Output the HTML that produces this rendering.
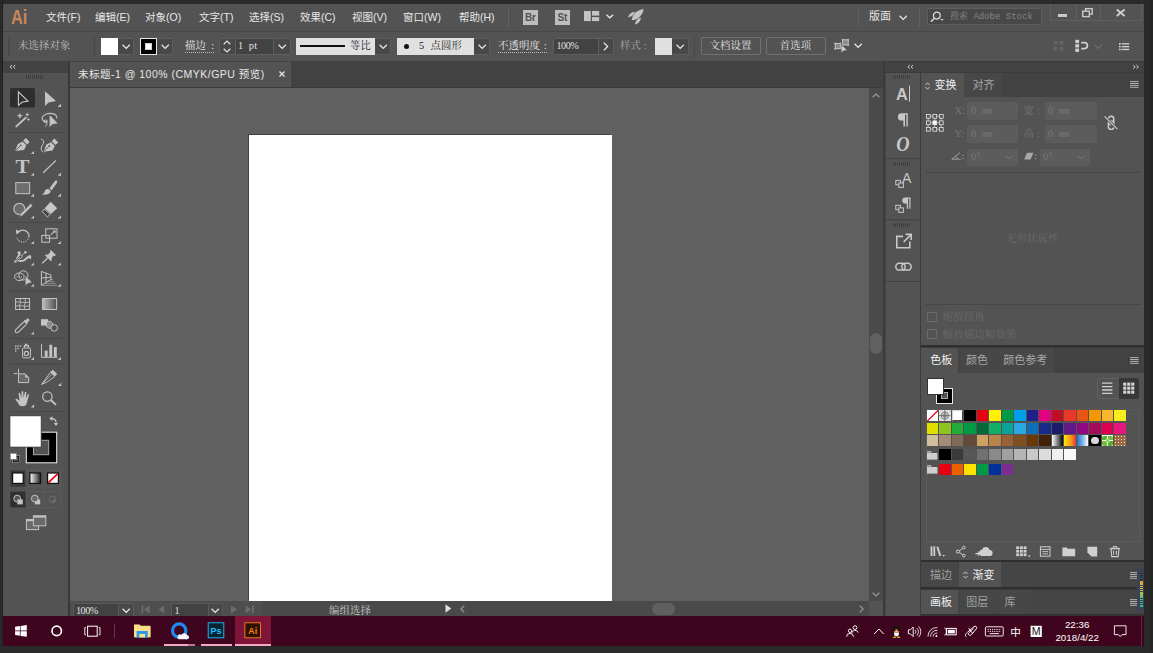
<!DOCTYPE html>
<html lang="zh-CN">
<head>
<meta charset="utf-8">
<title>Adobe Illustrator</title>
<style>
*{box-sizing:border-box;margin:0;padding:0}
html,body{width:1153px;height:653px;overflow:hidden;background:#2a2a2a}
body{position:relative;font-family:"Liberation Sans","Noto Sans CJK SC",sans-serif;font-size:11px;color:#ddd}
.a{position:absolute}
.t{position:absolute;white-space:nowrap;line-height:1}
.sans{font-family:"Liberation Sans","Noto Sans CJK SC",sans-serif}
.serif{font-family:"Liberation Serif","Noto Serif CJK SC",serif}
.mono{font-family:"Liberation Mono","Noto Serif CJK SC",monospace}
svg{position:absolute;overflow:visible}
.dd{position:absolute;background:#484848;border:1px solid #5e5e5e;border-left:none;border-radius:0 2px 2px 0}
.fld{position:absolute;background:#454545;border:1px solid #5e5e5e}
.btn{position:absolute;border:1px solid #717171;border-radius:2px;text-align:center;color:#e0e0e0}
.m{top:11.5px;font-size:10.5px;color:#e8e8e8}
.c{top:41px;font-size:10.4px;letter-spacing:0.1px}
.pt{font-size:11px}
.ul{border-bottom:1px dotted #bbb}
</style>
</head>
<body>
<!-- outer dark frame -->
<div class="a" style="left:2.4px;top:0;width:0.8px;height:646px;background:#202020"></div>
<div class="a" style="left:1144px;top:0;width:9px;height:653px;background:#2a2a2a"></div>
<div class="a" style="left:1149.5px;top:0;width:3.5px;height:653px;background:#252525"></div>

<!-- ===== APP WINDOW ===== -->
<div id="app" class="a" style="left:3px;top:4px;width:1141px;height:612px;background:#535353"></div>

<!-- MENU BAR -->
<div id="menubar" class="a" style="left:3px;top:4px;width:1141px;height:27px;background:#535353"></div>
<div class="a" style="left:3px;top:31px;width:1141px;height:1px;background:#474747"></div>

<!-- menu content -->
<div class="t sans" style="left:11px;top:6.5px;font-size:20px;font-weight:bold;color:#c8875a;transform:scaleX(0.82);transform-origin:0 0">Ai</div>
<div class="t m" style="left:46px">文件(F)</div>
<div class="t m" style="left:95px">编辑(E)</div>
<div class="t m" style="left:145px">对象(O)</div>
<div class="t m" style="left:199px">文字(T)</div>
<div class="t m" style="left:249px">选择(S)</div>
<div class="t m" style="left:300px">效果(C)</div>
<div class="t m" style="left:352px">视图(V)</div>
<div class="t m" style="left:403px">窗口(W)</div>
<div class="t m" style="left:459px">帮助(H)</div>
<div class="a" style="left:508px;top:8px;width:1px;height:18px;background:#626262"></div>
<div class="a sans" style="left:523px;top:10px;width:14.5px;height:14.5px;background:#bdbdbd;color:#535353;font-size:10px;font-weight:bold;line-height:15px;text-align:center;letter-spacing:-0.3px">Br</div>
<div class="a sans" style="left:555px;top:10px;width:14.5px;height:14.5px;background:#bdbdbd;color:#535353;font-size:10px;font-weight:bold;line-height:15px;text-align:center;letter-spacing:-0.3px">St</div>
<svg style="left:584px;top:10.9px" width="16" height="11" viewBox="0 0 16 11"><rect x="0" y="0" width="6.8" height="10.1" fill="#c4c4c4"/><rect x="8" y="0" width="7.2" height="4.6" fill="#c4c4c4"/><rect x="8" y="6.1" width="7.2" height="4" fill="#c4c4c4"/></svg>
<svg style="left:606px;top:14px" width="8" height="5" viewBox="0 0 8 5"><path d="M0.5 0.8 L3.8 3.8 L7.1 0.8" fill="none" stroke="#e8e8e8" stroke-width="1.3"/></svg>
<svg style="left:0;top:0" width="660" height="30" viewBox="0 0 660 30"><path d="M643.5 8.9 C637.6 9.6 632.2 14 631.7 20 C637.6 20.4 642.9 15 643.5 8.9 Z" fill="#c4c4c4"/><path d="M635 11.8 C631.6 11.9 628.9 14.3 628 17.3 C631.2 17.2 633.8 15 635 11.8 Z" fill="#c4c4c4"/><path d="M640.8 17.6 C640.9 20.8 638.6 23.5 635 24.6 C635.1 21.4 637.5 18.7 640.8 17.6 Z" fill="#c4c4c4"/></svg>
<!-- right of menu -->
<div class="a" style="left:858px;top:8px;width:1px;height:18px;background:#626262"></div>
<div class="t sans" style="left:869px;top:11px;font-size:11px;color:#e6e6e6">版面</div>
<svg style="left:899px;top:15px" width="9" height="6" viewBox="0 0 9 6"><path d="M0.6 0.8 L4.2 4.4 L7.8 0.8" fill="none" stroke="#e8e8e8" stroke-width="1.3"/></svg>
<div class="a" style="left:919px;top:8px;width:1px;height:18px;background:#626262"></div>
<div class="a" style="left:927px;top:8.2px;width:115px;height:17.2px;background:#484848;border:1px solid #5e5e5e;border-radius:2px"></div>
<svg style="left:930px;top:11px" width="16" height="12" viewBox="0 0 16 12"><circle cx="6.8" cy="4.6" r="3.4" fill="none" stroke="#d8d8d8" stroke-width="1.3"/><path d="M4.4 7.2 L1 10.6" stroke="#d8d8d8" stroke-width="1.5" fill="none"/><path d="M10.3 8 L13.7 8 L12 9.8 Z" fill="#d8d8d8"/></svg>
<div class="t mono" style="left:950px;top:13px;font-size:9px;color:#858585;letter-spacing:0px">搜索 Adobe Stock</div>
<!-- window controls -->
<div class="a" style="left:1050px;top:4px;width:92px;height:16.5px;border:1px solid #5f5f5f;border-top:none"></div>
<div class="a" style="left:1075.5px;top:4px;width:1px;height:16px;background:#5f5f5f"></div>
<div class="a" style="left:1099.5px;top:4px;width:1px;height:16px;background:#5f5f5f"></div>
<div class="a" style="left:1058px;top:13.5px;width:9px;height:3px;background:#c8c8c8"></div>
<svg style="left:1082px;top:8px" width="12" height="10" viewBox="0 0 12 10"><rect x="3.6" y="0.7" width="6.6" height="5.4" fill="none" stroke="#c8c8c8" stroke-width="1.4"/><rect x="0.7" y="3.2" width="6.6" height="5.4" fill="#535353" stroke="#c8c8c8" stroke-width="1.4"/></svg>
<svg style="left:1116px;top:9px" width="10" height="8" viewBox="0 0 10 8"><path d="M0.8 0.5 L8.6 7 M8.6 0.5 L0.8 7" stroke="#d0d0d0" stroke-width="1.8" fill="none"/></svg>

<!-- CONTROL BAR -->
<div id="ctrlbar" class="a" style="left:3px;top:32px;width:1141px;height:29px;background:#535353"></div>

<!-- control bar content -->
<div class="a" style="left:8px;top:38px;width:2px;height:18px;background:repeating-linear-gradient(to bottom,#3e3e3e 0,#3e3e3e 1px,transparent 1px,transparent 2px)"></div>
<div class="t serif c" style="left:18px;color:#bdbdbd">未选择对象</div>
<div class="a" style="left:94px;top:35px;width:1px;height:22px;background:#474747"></div>
<div class="a" style="left:101px;top:38px;width:17px;height:16.5px;background:#fff"></div>
<div class="dd" style="left:118px;top:38px;width:16px;height:16.5px"></div><svg style="left:122px;top:44px" width="9" height="6" viewBox="0 0 9 6"><path d="M0.6 0.8 L4.2 4.4 L7.8 0.8" fill="none" stroke="#e8e8e8" stroke-width="1.3"/></svg>
<div class="a" style="left:140px;top:38px;width:17px;height:16.5px;background:#000;border:1px solid #e8e8e8"></div>
<div class="a" style="left:145px;top:43px;width:7.2px;height:7px;background:#fff;border:1.6px solid #cfcfcf"></div>
<div class="dd" style="left:157px;top:38px;width:16px;height:16.5px"></div><svg style="left:161px;top:44px" width="9" height="6" viewBox="0 0 9 6"><path d="M0.6 0.8 L4.2 4.4 L7.8 0.8" fill="none" stroke="#e8e8e8" stroke-width="1.3"/></svg>
<div class="t serif c ul" style="left:185px;color:#e8e8e8;padding-bottom:0.5px;word-spacing:2.5px">描边 :</div>
<div class="fld" style="left:219px;top:38px;width:72px;height:16.5px;border-radius:2px;background:#484848"></div>
<div class="a" style="left:235px;top:39px;width:39px;height:14.5px;background:#424242;border-left:1px solid #5e5e5e;border-right:1px solid #5e5e5e"></div>
<svg style="left:223px;top:40px" width="8" height="13" viewBox="0 0 8 13"><path d="M0.7 4.2 L4 1 L7.3 4.2 M0.7 8.8 L4 12 L7.3 8.8" fill="none" stroke="#e0e0e0" stroke-width="1.2"/></svg>
<div class="t serif" style="left:238px;top:41px;font-size:10.4px;color:#e0e0e0;word-spacing:2.4px;letter-spacing:0.3px">1 pt</div><svg style="left:278px;top:44px" width="9" height="6" viewBox="0 0 9 6"><path d="M0.6 0.8 L4.2 4.4 L7.8 0.8" fill="none" stroke="#e8e8e8" stroke-width="1.3"/></svg>
<div class="a" style="left:296px;top:38px;width:79px;height:16.5px;background:#e0e0e0"></div>
<div class="a" style="left:300px;top:45px;width:45px;height:2px;background:#111"></div>
<div class="t serif c" style="left:350px;color:#1c1c1c">等比</div>
<div class="dd" style="left:375px;top:38px;width:16px;height:16.5px"></div><svg style="left:379px;top:44px" width="9" height="6" viewBox="0 0 9 6"><path d="M0.6 0.8 L4.2 4.4 L7.8 0.8" fill="none" stroke="#e8e8e8" stroke-width="1.3"/></svg>
<div class="a" style="left:397px;top:38px;width:77px;height:16.5px;background:#e0e0e0"></div>
<div class="a" style="left:404px;top:43.5px;width:5px;height:5px;border-radius:50%;background:#111"></div>
<div class="t serif c" style="left:419px;color:#1c1c1c;word-spacing:3.5px">5 点圆形</div>
<div class="dd" style="left:474px;top:38px;width:16px;height:16.5px"></div><svg style="left:478px;top:44px" width="9" height="6" viewBox="0 0 9 6"><path d="M0.6 0.8 L4.2 4.4 L7.8 0.8" fill="none" stroke="#e8e8e8" stroke-width="1.3"/></svg>
<div class="t serif c ul" style="left:498px;color:#e8e8e8;padding-bottom:0.5px;word-spacing:1px">不透明度 :</div>
<div class="fld" style="left:553px;top:38px;width:61px;height:16.5px;border-radius:2px;background:#484848"></div>
<div class="a" style="left:554px;top:39px;width:44.5px;height:14.5px;background:#424242;border-right:1px solid #5e5e5e"></div>
<div class="t serif" style="left:556.5px;top:40.5px;font-size:10.2px;color:#e0e0e0;letter-spacing:-0.5px">100%</div>
<svg style="left:603px;top:42px" width="6" height="9" viewBox="0 0 6 9"><path d="M0.8 0.6 L4.6 4.5 L0.8 8.4" fill="none" stroke="#e8e8e8" stroke-width="1.3"/></svg>
<div class="t serif c" style="left:620px;color:#a8a8a8">样式 :</div>
<div class="a" style="left:655px;top:38px;width:17.5px;height:16.5px;background:#e0e0e0"></div>
<div class="dd" style="left:672px;top:38px;width:16.5px;height:16.5px"></div><svg style="left:676px;top:44px" width="9" height="6" viewBox="0 0 9 6"><path d="M0.6 0.8 L4.2 4.4 L7.8 0.8" fill="none" stroke="#e8e8e8" stroke-width="1.3"/></svg>
<div class="a" style="left:694px;top:35px;width:1px;height:22px;background:#474747"></div>
<div class="btn serif" style="left:700.5px;top:37px;width:60px;height:17.6px;font-size:10.4px;line-height:15.5px;letter-spacing:0.1px">文档设置</div>
<div class="btn serif" style="left:765.5px;top:37px;width:60px;height:17.6px;font-size:10.4px;line-height:15.5px;letter-spacing:0.1px">首选项</div>
<svg style="left:0;top:0" width="870" height="62" viewBox="0 0 870 62"><rect x="835.2" y="43.5" width="5.2" height="5.2" fill="#888" stroke="#cfcfcf" stroke-width="0.9"/><path d="M834.2 43.5 H835.2 M835.2 42.5 V43.5 M840.4 42.5 V43.5 M834.2 48.7 H835.2 M835.2 48.7 V49.7" stroke="#cfcfcf" stroke-width="0.8" fill="none"/><rect x="842.6" y="39.8" width="5.6" height="5.2" fill="#888" stroke="#cfcfcf" stroke-width="0.9"/><path d="M841.6 39.8 H842.6 M842.6 38.8 V39.8 M848.2 38.8 V39.8 M848.2 39.8 H849.2 M848.2 45 H849.2 M848.2 45 V46" stroke="#cfcfcf" stroke-width="0.8" fill="none"/><path d="M841.2 44.4 V53 L843.6 50.8 L847.2 50.2 Z" fill="#cfcfcf" stroke="#535353" stroke-width="0.5"/></svg><svg style="left:854px;top:43.3px" width="9" height="6" viewBox="0 0 9 6"><path d="M0.6 0.8 L4.2 4.4 L7.8 0.8" fill="none" stroke="#e8e8e8" stroke-width="1.3"/></svg>
<!-- right side of control bar -->
<svg style="left:1053px;top:39.7px" width="14" height="13" viewBox="0 0 14 13"><g fill="#646464"><rect x="0.5" y="1" width="4" height="3.6"/><rect x="6.5" y="1" width="4" height="3.6"/><rect x="0.5" y="7" width="4" height="3.6"/><rect x="6.5" y="7" width="4" height="3.6"/></g></svg>
<svg style="left:1075px;top:39px" width="15" height="14" viewBox="0 0 15 14"><g fill="#d0d0d0"><rect x="0.3" y="0.8" width="3.8" height="3.3"/><rect x="0.3" y="5.2" width="3.8" height="3.3"/><rect x="0.3" y="9.6" width="3.8" height="3.3"/></g><path d="M6.2 3.6 H9.4 A3 3 0 0 1 9.4 9.6 H6.2" fill="none" stroke="#d0d0d0" stroke-width="1.7"/></svg>
<svg style="left:1094px;top:43.5px" width="9" height="6" viewBox="0 0 9 6"><path d="M0.6 0.8 L4.2 4.4 L7.8 0.8" fill="none" stroke="#6e6e6e" stroke-width="1.3"/></svg>
<svg style="left:1118.8px;top:42.8px" width="11" height="8" viewBox="0 0 11 8"><g fill="#d4d4d4"><rect x="0" y="0" width="1.6" height="1.7"/><rect x="0" y="2.8" width="1.6" height="1.7"/><rect x="0" y="5.6" width="1.6" height="1.7"/><rect x="2.6" y="0.2" width="7.6" height="1.3"/><rect x="2.6" y="3" width="7.6" height="1.3"/><rect x="2.6" y="5.8" width="7.6" height="1.3"/></g></svg>

<!-- dark band under control bar -->
<div class="a" style="left:3px;top:61px;width:1141px;height:12px;background:#424242"></div>

<!-- LEFT TOOLBAR -->
<div id="tools" class="a" style="left:3px;top:73px;width:65px;height:543px;background:#535353"></div>
<div class="a" style="left:68px;top:61px;width:2px;height:555px;background:#383838"></div>

<!-- toolbar content -->
<svg style="left:0;top:0" width="70" height="540" viewBox="0 0 70 540">
<!-- collapse arrows + grip -->
<path d="M12 65 L10 66.8 L12 68.6 M15.2 65 L13.2 66.8 L15.2 68.6" fill="none" stroke="#d0d0d0" stroke-width="1"/>
<g fill="#3c3c3c"><rect x="26" y="75" width="1" height="4"/><rect x="28" y="75" width="1" height="4"/><rect x="30" y="75" width="1" height="4"/><rect x="32" y="75" width="1" height="4"/><rect x="34" y="75" width="1" height="4"/><rect x="36" y="75" width="1" height="4"/><rect x="38" y="75" width="1" height="4"/><rect x="40" y="75" width="1" height="4"/><rect x="42" y="75" width="1" height="4"/></g>
<!-- separators -->
<g fill="#474747"><rect x="9" y="132" width="54" height="1"/><rect x="9" y="222" width="54" height="1"/><rect x="9" y="290.5" width="54" height="1"/><rect x="9" y="338" width="54" height="1"/><rect x="9" y="363.5" width="54" height="1"/><rect x="9" y="411" width="54" height="1"/></g>
<!-- flyout triangles -->
<g fill="#c4c4c4">
<path d="M57.6 107 H61 V103.7 Z"/>
<path d="M30.8 154.1 H34 V151 Z"/>
<path d="M30.8 175.8 H34 V172.7 Z"/><path d="M57.6 175.8 H61 V172.5 Z"/>
<path d="M30.8 196.7 H34 V193.6 Z"/><path d="M57.6 196.7 H61 V193.6 Z"/>
<path d="M30.8 218.5 H34 V215.4 Z"/><path d="M57.6 218.5 H61 V215.4 Z"/>
<path d="M30.8 244.1 H34 V241 Z"/><path d="M57.6 244.1 H60.9 V241 Z"/>
<path d="M30.8 265.6 H34 V262.5 Z"/><path d="M57.6 265.6 H60.9 V262.5 Z"/>
<path d="M30.8 286.8 H34 V283.7 Z"/><path d="M57.6 286.8 H60.9 V283.7 Z"/>
<path d="M30.8 334.5 H34 V331.4 Z"/>
<path d="M30.8 360.1 H34 V357 Z"/><path d="M57.6 360.1 H60.9 V357 Z"/>
<path d="M57.9 385.9 H61.2 V382.7 Z"/>
<path d="M30.8 407.6 H34.1 V404.3 Z"/>
</g>
<!-- row1: selection (active) / direct selection -->
<rect x="10" y="88" width="25" height="19.5" rx="2" fill="#2e2e2e"/>
<path d="M18.4 91.8 V105.3 L21.9 102.3 L28 101.1 Z" fill="none" stroke="#cfcfcf" stroke-width="1.1" stroke-linejoin="miter"/>
<path d="M45 91.2 V105.9 L48.5 102.4 L56 101 Z" fill="#c4c4c4"/>
<!-- row2: magic wand / lasso -->
<path d="M16.3 126.4 L25.8 117.6" stroke="#c4c4c4" stroke-width="1.9" stroke-linecap="round"/>
<path d="M19.8 112.8 L20.7 115 L23 115.7 L20.8 116.6 L19.9 118.9 L19 116.6 L16.7 115.8 L18.9 115 Z" fill="#c4c4c4"/>
<path d="M27.2 112.3 L27.8 114 L29.5 114.6 L27.8 115.2 L27.2 117 L26.6 115.2 L24.9 114.6 L26.6 114 Z" fill="#c4c4c4"/>
<path d="M28.3 117.6 L28.8 119 L30.2 119.5 L28.8 120 L28.3 121.4 L27.8 120 L26.4 119.5 L27.8 119 Z" fill="#c4c4c4"/>
<path d="M47.5 121.5 C43 121.8 41.6 119.5 42.3 117.5 C43.5 114 48.5 112.8 52.5 113.6 C56 114.4 57.6 116.5 56.6 118.6" fill="none" stroke="#c4c4c4" stroke-width="1.1"/>
<ellipse cx="45.6" cy="121.4" rx="1.7" ry="1.4" fill="none" stroke="#c4c4c4" stroke-width="1"/>
<path d="M46.6 122.6 C47.6 124 46.6 125.6 45 126.4" fill="none" stroke="#c4c4c4" stroke-width="1"/>
<path d="M49.3 114.4 V127.8 L52.3 124.6 L58.2 123.4 Z" fill="#c4c4c4" stroke="#535353" stroke-width="0.6"/>
<!-- row3: pen / curvature -->
<g id="pen">
<path d="M15 151.1 L17.9 144 L22.6 141.6 L26.3 145.3 L24.1 150 Z" fill="#c4c4c4"/>
<path d="M15.4 150.7 L20.4 145.7" stroke="#535353" stroke-width="0.9"/>
<circle cx="20.8" cy="145.3" r="0.9" fill="#535353"/>
<path d="M23.2 140.6 L25.9 138 L29.7 141.9 L27 144.5 Z" fill="#c4c4c4"/>
</g>
<g transform="translate(28.5,0.6)">
<path d="M15 151.1 L17.9 144 L22.6 141.6 L26.3 145.3 L24.1 150 Z" fill="#c4c4c4"/>
<path d="M15.4 150.7 L20.4 145.7" stroke="#535353" stroke-width="0.9"/>
<circle cx="20.8" cy="145.3" r="0.9" fill="#535353"/>
<path d="M23.2 140.6 L25.9 138 L29.7 141.9 L27 144.5 Z" fill="#c4c4c4"/>
</g>
<path d="M41 139.2 C43.5 139.6 44.4 141.4 43.2 143.6 C41.4 146.8 39.6 149.5 43.3 152.3" fill="none" stroke="#c4c4c4" stroke-width="1"/>
<!-- row4: type / line -->
<text x="22.5" y="172.9" font-family="Liberation Serif, serif" font-size="19.5" font-weight="bold" fill="#c4c4c4" text-anchor="middle" transform="translate(22.5 0) scale(1.08 1) translate(-22.5 0)">T</text>
<path d="M43.2 172.8 L56 160.4" stroke="#c4c4c4" stroke-width="1.3"/>
<!-- row5: rectangle / brush -->
<rect x="15.8" y="182.6" width="13.8" height="11" fill="#6e6e6e" stroke="#bcbcbc" stroke-width="1.1"/>
<path d="M56.6 180.6 C57.6 181.2 57.4 182.4 56.6 183.6 L51.6 190.2 L49.4 188.4 L54.4 181.8 C55.2 180.8 56 180.2 56.6 180.6 Z" fill="#c4c4c4"/>
<path d="M48.6 189.2 L50.8 191 C50.6 193.4 47.6 195 41.8 194.8 C44 193.8 44.2 192.4 44.8 191 C45.6 189.4 47.4 188.8 48.6 189.2 Z" fill="#c4c4c4"/>
<!-- row6: shaper / eraser -->
<circle cx="19.3" cy="208.9" r="5.5" fill="#6a6a6a" stroke="#c4c4c4" stroke-width="1.1"/>
<path d="M30.8 203.6 L32.9 205.6 L22.4 215.8 L19.4 216.9 L20.4 213.8 Z" fill="#c4c4c4" stroke="#535353" stroke-width="0.7"/>
<path d="M50.7 201.8 L57.2 208.3 L51 213.9 L44.7 208.2 Z" fill="#c8c8c8"/>
<path d="M44.2 209 L50.2 214.5 L47.4 216.9 L42.3 211.7 Z" fill="#3e3e3e" stroke="#c8c8c8" stroke-width="1"/>
<!-- row7: rotate / scale -->
<path d="M18.2 232.2 A6.2 6.2 0 0 1 29 236.8" fill="none" stroke="#c4c4c4" stroke-width="1.2"/>
<path d="M29 236.8 A6.2 6.2 0 0 1 16.8 237.2" fill="none" stroke="#c4c4c4" stroke-width="1.1" stroke-dasharray="1.1 1.3"/>
<path d="M15.8 229.6 L20.4 231.4 L16.4 234.6 Z" fill="#c4c4c4"/>
<rect x="41.8" y="235.4" width="7.8" height="6.8" fill="none" stroke="#c4c4c4" stroke-width="1"/>
<rect x="45.8" y="228.8" width="11.2" height="9.4" fill="none" stroke="#c4c4c4" stroke-width="1"/>
<path d="M51 234.6 L55 230.8" stroke="#c4c4c4" stroke-width="1.1"/><path d="M52.6 230.4 H55.6 V233.4 Z" fill="#c4c4c4"/>
<!-- row8: width / puppet pin -->
<path d="M17.2 252.4 C18.6 250.6 21 250.8 20.6 253.4 C20.2 255.8 18 257 17.4 259 C19.6 260.4 22.6 260.6 24.8 258.6 C26.6 256.8 28.6 254.4 31 255.4 C31.6 257 31 258.6 30.2 259.6 C29.6 258 28.4 257.8 27.2 259 C25 261.4 21.6 262.6 18.4 261.6 C16 260.8 15.4 259.4 16.4 257.6 C17.6 255.6 19 254.4 17.2 252.4 Z" fill="#c4c4c4"/>
<path d="M15.2 261.6 L25.6 252" stroke="#535353" stroke-width="2"/><path d="M15 261.8 L25.8 251.8" stroke="#c4c4c4" stroke-width="0.9"/>
<circle cx="15.4" cy="261.4" r="1.2" fill="#c4c4c4"/><circle cx="25.4" cy="252.2" r="1.2" fill="#c4c4c4"/><circle cx="20.4" cy="256.8" r="1.6" fill="#535353" stroke="#c4c4c4" stroke-width="0.8"/>
<path d="M50.6 249.8 L56 255 C55 256 54.2 256 53.4 255.8 L51.4 258.6 C52 259.6 51.8 260.4 51 261.2 L45 255.4 C45.8 254.6 46.8 254.4 47.6 254.8 L50.2 252.6 C50 251.6 50 250.6 50.6 249.8 Z" fill="#c4c4c4"/>
<path d="M47.6 258 L42.2 263.4" stroke="#c4c4c4" stroke-width="1.3"/>
<!-- row9: shape builder / perspective grid -->
<circle cx="23.4" cy="275.4" r="4.6" fill="none" stroke="#c4c4c4" stroke-width="1"/>
<ellipse cx="19.4" cy="276.8" rx="4.8" ry="3.8" fill="none" stroke="#c4c4c4" stroke-width="1"/>
<circle cx="17.2" cy="276.8" r="0.6" fill="#c4c4c4"/><circle cx="19.4" cy="276.8" r="0.6" fill="#c4c4c4"/><circle cx="21.6" cy="276.8" r="0.6" fill="#c4c4c4"/>
<path d="M25.2 275.6 V286.2 L27.8 283.6 L32.4 282.6 Z" fill="#c4c4c4" stroke="#535353" stroke-width="0.7"/>
<path d="M41.4 271.4 V285.4 L51 279.4 V275 Z M41.4 278 L51 277.2 M46 273.2 V282.6" fill="none" stroke="#c4c4c4" stroke-width="1"/>
<path d="M41.4 285.4 L57.4 285.4 M45 283.4 H55.8 M48 281.4 H54.2 M50.4 279.6 H52.8" fill="none" stroke="#a0a0a0" stroke-width="0.8"/>
<!-- row10: mesh / gradient -->
<rect x="15.6" y="298.5" width="14" height="11" fill="none" stroke="#c4c4c4" stroke-width="1"/>
<path d="M15.6 302.4 C19 300.8 22 303.6 29.6 302 M15.6 306.2 C20 304.4 24 307.4 29.6 305.8 M19.6 298.5 C22 302 18 305 20.4 309.5 M24.6 298.5 C27 302 22.6 305.6 25.4 309.5" fill="none" stroke="#c4c4c4" stroke-width="0.9"/>
<defs><linearGradient id="gr1" x1="0" x2="1" y1="0" y2="0"><stop offset="0" stop-color="#bdbdbd"/><stop offset="1" stop-color="#4e4e4e"/></linearGradient>
<linearGradient id="gr2" x1="0" x2="1" y1="0" y2="0"><stop offset="0" stop-color="#fff"/><stop offset="1" stop-color="#222"/></linearGradient></defs>
<rect x="42.6" y="298.5" width="14" height="11" fill="url(#gr1)" stroke="#c4c4c4" stroke-width="1"/>
<!-- row11: eyedropper / blend -->
<path d="M27.4 318.6 C28.6 318.2 29.8 319.6 29.2 320.8 L27.4 322.6 L27.9 323.2 L26.6 324.5 L23.4 321.3 L24.7 320 L25.3 320.5 Z" fill="#c4c4c4"/>
<path d="M23.6 322 L16 329.4 C15 330.4 15 331.6 15.6 332.3 C16.3 333 17.6 332.9 18.4 332.1 L26.2 324.6" fill="none" stroke="#c4c4c4" stroke-width="1.1"/>
<rect x="41" y="319.2" width="7.2" height="6.4" fill="#c4c4c4"/>
<path d="M46.6 322.2 L50.4 321.2 L52.8 323.4 L52.6 327 L49.4 328.6 L46.4 326.4 Z" fill="#8a8a8a" stroke="#c4c4c4" stroke-width="0.9"/>
<circle cx="54.2" cy="327.9" r="3.3" fill="#535353" stroke="#c4c4c4" stroke-width="1"/>
<!-- row12: symbol sprayer / graph -->
<rect x="22.6" y="348" width="7.8" height="9.8" rx="0.8" fill="none" stroke="#c4c4c4" stroke-width="1"/>
<circle cx="26.4" cy="353.4" r="2.1" fill="none" stroke="#c4c4c4" stroke-width="1.2"/>
<path d="M24.4 348 V345.6 H28.4 V348 M25.4 345.4 V344.2 H27.6" fill="none" stroke="#c4c4c4" stroke-width="1.1"/>
<g fill="#c4c4c4"><rect x="15" y="345.4" width="1.4" height="1.4"/><rect x="17.4" y="345.4" width="1.4" height="1.4"/><rect x="19.8" y="345.4" width="1.4" height="1.4"/><rect x="15" y="347.8" width="1.4" height="1.4"/><rect x="17.4" y="347.8" width="1.4" height="1.4"/><rect x="15" y="350.2" width="1.4" height="1.4"/></g>
<path d="M41.5 344.2 V357.3 H57.4" fill="none" stroke="#c4c4c4" stroke-width="1"/>
<g fill="#c4c4c4"><rect x="44.7" y="350.6" width="2.9" height="6.3"/><rect x="49.3" y="344.8" width="2.9" height="12.1"/><rect x="53.9" y="347.1" width="2.9" height="9.8"/></g>
<!-- row13: artboard / slice -->
<path d="M18.5 368.8 V373.5 M13.7 373.6 H17.5" stroke="#c4c4c4" stroke-width="1"/>
<path d="M18.5 373.9 H25.2 L28.7 377.4 V382.6 H18.5 Z" fill="#6a6a6a" stroke="#c4c4c4" stroke-width="1"/>
<path d="M25.2 373.9 V377.4 H28.7 Z" fill="#c4c4c4"/>
<path d="M41.6 384.4 L50.6 372.2 L55 376.4 L47.4 381.8 Z" fill="none" stroke="#c4c4c4" stroke-width="1"/>
<path d="M41.6 384.4 L51.6 374.6" stroke="#c4c4c4" stroke-width="0.8"/>
<path d="M50.4 372 L52.8 369.8 L57.2 374 L54.8 376.4 Z" fill="#c4c4c4"/>
<!-- row14: hand / zoom -->
<path d="M19.6 405.6 C18.4 403.6 16.6 401 15.4 399.6 C15.8 398.6 17 398.6 17.8 399.4 L19.6 401 L18.6 393.6 C18.6 392.6 19.8 392.4 20.2 393.4 L21.4 398.2 L21.6 391.8 C21.8 390.8 23 390.8 23.2 391.8 L23.6 398 L24.8 392.4 C25.2 391.4 26.4 391.6 26.4 392.6 L25.8 398.6 L27.6 394.6 C28.2 393.8 29.2 394.2 29 395.2 L27.4 400.6 C27.2 402.6 26.6 404.2 25.6 405.6 C23.8 406.4 21.4 406.4 19.6 405.6 Z" fill="#c4c4c4"/>
<circle cx="47.4" cy="396.6" r="4.7" fill="none" stroke="#c4c4c4" stroke-width="1.2"/>
<path d="M50.8 400 L56 404.9" stroke="#c4c4c4" stroke-width="1.9"/>
<!-- fill / stroke -->
<rect x="26.3" y="432.2" width="30.4" height="30.6" fill="#000" stroke="#f0f0f0" stroke-width="1"/>
<rect x="33.5" y="440.3" width="15.2" height="14.4" fill="#535353" stroke="#a8a8a8" stroke-width="1"/>
<rect x="9.9" y="415.8" width="31.3" height="31.3" fill="#fff" stroke="#333" stroke-width="0.8"/>
<path d="M52 418.6 C54.6 418.6 56 420 56 422.6" fill="none" stroke="#c4c4c4" stroke-width="1.3"/>
<path d="M49.2 418.6 L52.4 416.2 V421 Z M56 426 L53.8 423 H58.2 Z" fill="#c4c4c4"/>
<rect x="13.2" y="456.2" width="5.8" height="5.8" fill="#535353" stroke="#111" stroke-width="1.4"/><rect x="12.6" y="455.6" width="7" height="7" fill="none" stroke="#c8c8c8" stroke-width="0.5"/>
<rect x="10.4" y="453.4" width="6" height="5.8" fill="#fff" stroke="#888" stroke-width="0.6"/>
<!-- colour mode row -->
<rect x="10.2" y="470.2" width="50.4" height="16.6" rx="1.5" fill="none" stroke="#5e5e5e" stroke-width="0.9"/>
<path d="M10.2 471.5 Q10.2 470.2 11.5 470.2 H26 V486.8 H11.5 Q10.2 486.8 10.2 485.5 Z" fill="#3a3a3a"/>
<path d="M26 470.2 V486.8 M44.6 470.2 V486.8" stroke="#5e5e5e" stroke-width="0.8"/>
<rect x="12.6" y="473" width="10.6" height="10.4" fill="#fff" stroke="#111" stroke-width="1.2"/>
<rect x="29.9" y="473" width="10.6" height="10.4" fill="url(#gr2)" stroke="#111" stroke-width="1.2"/>
<rect x="47.6" y="473" width="10.8" height="10.4" fill="#fff" stroke="#111" stroke-width="1.2"/>
<path d="M48.4 482.6 L57.6 473.8" stroke="#f00018" stroke-width="1.8"/>
<!-- draw mode row -->
<rect x="10.2" y="491.4" width="50.4" height="16" rx="1.5" fill="none" stroke="#5e5e5e" stroke-width="0.9"/>
<path d="M10.2 492.7 Q10.2 491.4 11.5 491.4 H26 V507.4 H11.5 Q10.2 507.4 10.2 506.1 Z" fill="#303030"/>
<path d="M26 491.4 V507.4 M44.6 491.4 V507.4" stroke="#5e5e5e" stroke-width="0.8"/>
<circle cx="17.2" cy="498.6" r="3.4" fill="#555" stroke="#c4c4c4" stroke-width="1"/><rect x="17.4" y="499.4" width="5.4" height="5" fill="#c4c4c4"/>
<rect x="34.8" y="499.4" width="5.4" height="5" fill="#c4c4c4"/><circle cx="34.8" cy="498.6" r="3.4" fill="#6a6a6a" stroke="#c4c4c4" stroke-width="1"/>
<circle cx="52.6" cy="499.4" r="3.3" fill="none" stroke="#6e6e6e" stroke-width="1"/><path d="M52.6 499.4 H55.9 A3.3 3.3 0 0 1 52.6 502.7 Z" fill="#6e6e6e"/>
<!-- screen mode -->
<rect x="26.4" y="519.4" width="12.2" height="10.2" fill="#6a6a6a" stroke="#c4c4c4" stroke-width="1"/><rect x="26.4" y="519.4" width="12.2" height="1.8" fill="#c4c4c4"/>
<rect x="33.4" y="515.8" width="12.4" height="10" fill="#6a6a6a" stroke="#c4c4c4" stroke-width="1"/><rect x="33.4" y="515.8" width="12.4" height="1.8" fill="#c4c4c4"/>
</svg>
<!-- /toolbar content -->

<!-- DOCUMENT AREA -->
<div id="tabbar" class="a" style="left:70px;top:62px;width:813px;height:25px;background:#424242"></div>
<div id="doctab" class="a" style="left:70px;top:62px;width:221px;height:25px;background:#535353"></div>
<div class="a" style="left:70px;top:87px;width:813px;height:1px;background:#3a3a3a"></div>
<div id="canvas" class="a" style="left:70px;top:88px;width:799px;height:513px;background:#606060"></div>
<div id="artboard" class="a" style="left:249px;top:135px;width:363px;height:466px;background:#fff;box-shadow:-1px -1px 0 0 rgba(40,40,40,.55)"></div>
<!-- doc tab content -->
<div id="tabtxt" class="t sans" style="left:78px;top:69.4px;font-size:10.5px;letter-spacing:0.49px;color:#e6e6e6">未标题-1 @ 100% (CMYK/GPU 预览)</div>
<svg style="left:278.5px;top:71px" width="6" height="6" viewBox="0 0 6 6"><path d="M0.5 0.5 L5.5 5.5 M5.5 0.5 L0.5 5.5" stroke="#e6e6e6" stroke-width="1.3" fill="none"/></svg>
<!-- v scrollbar -->
<div class="a" style="left:869px;top:88px;width:14px;height:513px;background:#4a4a4a"></div>
<div class="a" style="left:870px;top:333px;width:12px;height:21px;background:#606060;border-radius:6px"></div>
<!-- status bar -->
<div id="status" class="a" style="left:70px;top:601px;width:813px;height:15px;background:#4a4a4a"></div>

<!-- status bar content -->
<div class="a" style="left:869px;top:601px;width:14px;height:15px;background:#535353"></div>
<div class="a" style="left:70px;top:601px;width:192px;height:15px;background:#4e4e4e"></div>
<div class="a" style="left:73px;top:602.5px;width:61px;height:13.5px;background:#484848;border:1px solid #5a5a5a;border-bottom:none;border-radius:2px 2px 0 0"></div>
<div class="a" style="left:74px;top:603.5px;width:45px;height:12.5px;background:#424242;border-right:1px solid #5a5a5a"></div>
<div class="t serif" style="left:76px;top:605.6px;font-size:10.2px;color:#e0e0e0;letter-spacing:-0.5px">100%</div><svg style="left:122px;top:608px" width="9" height="6" viewBox="0 0 9 6"><path d="M0.6 0.8 L4.2 4.4 L7.8 0.8" fill="none" stroke="#e8e8e8" stroke-width="1.3"/></svg>
<svg style="left:141px;top:605px" width="26" height="9" viewBox="0 0 26 9"><g fill="#6c6c6c"><rect x="0.6" y="0.5" width="1.6" height="8"/><path d="M8.6 0.5 L8.6 8.5 L3 4.5 Z"/><path d="M23.2 0.5 L23.2 8.5 L17.4 4.5 Z"/></g></svg>
<div class="a" style="left:171px;top:602.5px;width:52px;height:13.5px;background:#484848;border:1px solid #5a5a5a;border-bottom:none;border-radius:2px 2px 0 0"></div>
<div class="a" style="left:172px;top:603.5px;width:36.5px;height:12.5px;background:#424242;border-right:1px solid #5a5a5a"></div>
<div class="t serif" style="left:174.5px;top:605.6px;font-size:10.2px;color:#e0e0e0">1</div><svg style="left:211px;top:608px" width="9" height="6" viewBox="0 0 9 6"><path d="M0.6 0.8 L4.2 4.4 L7.8 0.8" fill="none" stroke="#e8e8e8" stroke-width="1.3"/></svg>
<svg style="left:230px;top:605px" width="26" height="9" viewBox="0 0 26 9"><g fill="#6c6c6c"><path d="M1 0.5 L1 8.5 L6.8 4.5 Z"/><path d="M15.6 0.5 L15.6 8.5 L21.2 4.5 Z"/><rect x="22" y="0.5" width="1.6" height="8"/></g></svg>
<div class="t serif" style="left:329px;top:606.3px;font-size:10.4px;color:#c8c8c8;letter-spacing:0.1px">编组选择</div>
<svg style="left:445px;top:604px" width="7" height="9" viewBox="0 0 7 9"><path d="M0.5 0.3 L0.5 8.7 L6.3 4.5 Z" fill="#e0e0e0"/></svg>
<svg style="left:460px;top:604.5px" width="5" height="8" viewBox="0 0 5 8"><path d="M4.2 0.6 L0.9 4 L4.2 7.4" fill="none" stroke="#9a9a9a" stroke-width="1.2"/></svg>
<svg style="left:859px;top:604.5px" width="5" height="8" viewBox="0 0 5 8"><path d="M0.8 0.6 L4.1 4 L0.8 7.4" fill="none" stroke="#9a9a9a" stroke-width="1.2"/></svg>
<div class="a" style="left:651.5px;top:603px;width:23px;height:12px;background:#606060;border-radius:6px"></div>
<svg style="left:871.8px;top:591.6px" width="8" height="5" viewBox="0 0 8 5"><path d="M0.6 0.7 L4 4 L7.4 0.7" fill="none" stroke="#9a9a9a" stroke-width="1.2"/></svg>
<svg style="left:871.8px;top:93px" width="8" height="5" viewBox="0 0 8 5"><path d="M0.6 4.3 L4 1 L7.4 4.3" fill="none" stroke="#9a9a9a" stroke-width="1.2"/></svg>

<!-- RIGHT DOCK -->
<div class="a" style="left:883px;top:61px;width:261px;height:555px;background:#3b3b3b"></div>
<div class="a" style="left:885px;top:62px;width:259px;height:10px;background:#424242"></div>
<div id="iconcol" class="a" style="left:885px;top:73px;width:34.5px;height:208px;background:#535353"></div>
<div class="a" style="left:885px;top:282px;width:34.5px;height:334px;background:#535353"></div>
<div id="panel1" class="a" style="left:921px;top:73px;width:223px;height:272px;background:#535353"></div>
<div id="panel2" class="a" style="left:921px;top:348px;width:223px;height:212px;background:#535353"></div>
<div id="panel3" class="a" style="left:921px;top:562px;width:223px;height:25px;background:#454545"></div>
<div id="panel4" class="a" style="left:921px;top:589.5px;width:223px;height:25px;background:#454545"></div>

<!-- right dock content -->
<svg style="left:0;top:0" width="1153" height="653" viewBox="0 0 1153 653">
<path d="M909.8 65 L907.8 66.8 L909.8 68.6 M913 65 L911 66.8 L913 68.6" fill="none" stroke="#d0d0d0" stroke-width="1"/>
<path d="M1133.2 65 L1135.2 66.8 L1133.2 68.6 M1136.4 65 L1138.4 66.8 L1136.4 68.6" fill="none" stroke="#d0d0d0" stroke-width="1"/>
<g fill="#3c3c3c"><rect x="893" y="75.4" width="1" height="3.2"/><rect x="895" y="75.4" width="1" height="3.2"/><rect x="897" y="75.4" width="1" height="3.2"/><rect x="899" y="75.4" width="1" height="3.2"/><rect x="901" y="75.4" width="1" height="3.2"/><rect x="903" y="75.4" width="1" height="3.2"/><rect x="905" y="75.4" width="1" height="3.2"/><rect x="907" y="75.4" width="1" height="3.2"/><rect x="909" y="75.4" width="1" height="3.2"/><rect x="893" y="162.4" width="1" height="3.2"/><rect x="895" y="162.4" width="1" height="3.2"/><rect x="897" y="162.4" width="1" height="3.2"/><rect x="899" y="162.4" width="1" height="3.2"/><rect x="901" y="162.4" width="1" height="3.2"/><rect x="903" y="162.4" width="1" height="3.2"/><rect x="905" y="162.4" width="1" height="3.2"/><rect x="907" y="162.4" width="1" height="3.2"/><rect x="909" y="162.4" width="1" height="3.2"/><rect x="893" y="223.4" width="1" height="3.2"/><rect x="895" y="223.4" width="1" height="3.2"/><rect x="897" y="223.4" width="1" height="3.2"/><rect x="899" y="223.4" width="1" height="3.2"/><rect x="901" y="223.4" width="1" height="3.2"/><rect x="903" y="223.4" width="1" height="3.2"/><rect x="905" y="223.4" width="1" height="3.2"/><rect x="907" y="223.4" width="1" height="3.2"/><rect x="909" y="223.4" width="1" height="3.2"/></g>
<g fill="#424242"><rect x="885" y="158.2" width="34.5" height="1"/><rect x="885" y="219.4" width="34.5" height="1"/><rect x="885" y="281" width="34.5" height="1"/></g>
<rect x="885" y="73" width="1" height="543" fill="#474747"/>
<text x="896" y="99.8" font-family="Liberation Sans, sans-serif" font-size="16.6" font-weight="bold" fill="#c8c8c8" transform="translate(896 0) scale(0.98 1) translate(-896 0)">A</text>
<rect x="909" y="85.6" width="1" height="16.2" fill="#c8c8c8"/>
<path d="M901.6 113.2 H907.8 V126.5 H906.4 V114.8 H905 V126.5 H903.4 V120.6 H901.6 A3.7 3.7 0 0 1 901.6 113.2 Z" fill="#c8c8c8"/>
<text x="896.2" y="151.2" font-family="Liberation Serif, serif" font-size="21.5" font-style="italic" font-weight="bold" fill="#c8c8c8" transform="translate(896.2 0) scale(0.86 1) translate(-896.2 0)">O</text>
<text x="902" y="182.9" font-family="Liberation Sans, sans-serif" font-size="14" fill="#c8c8c8">A</text>
<rect x="895.8" y="180.4" width="4.6" height="4.4" fill="#535353" stroke="#c8c8c8" stroke-width="1"/><rect x="898.8" y="183" width="4.6" height="4.4" fill="#535353" stroke="#c8c8c8" stroke-width="1"/>
<path d="M905.4 197.4 H910.5 V208.7 H909.3 V198.8 H908.1 V208.7 H906.8 V203.6 H905.4 A3.1 3.1 0 0 1 905.4 197.4 Z" fill="#c8c8c8"/>
<rect x="895.8" y="205.3" width="4.6" height="4.4" fill="#535353" stroke="#c8c8c8" stroke-width="1"/><rect x="898.8" y="207.9" width="4.6" height="4.4" fill="#535353" stroke="#c8c8c8" stroke-width="1"/>
<path d="M903 236.4 H896.8 V247.8 H909.8 V241.6" fill="none" stroke="#c8c8c8" stroke-width="1.6"/>
<path d="M905.6 234.4 H911.2 V240 M911 234.6 L903.6 242" fill="none" stroke="#c8c8c8" stroke-width="1.6"/>
<rect x="895.8" y="263.3" width="9.4" height="6.8" rx="3.4" fill="none" stroke="#c8c8c8" stroke-width="1.5"/>
<rect x="901.8" y="263.3" width="9.4" height="6.8" rx="3.4" fill="none" stroke="#c8c8c8" stroke-width="1.5"/>
</svg>
<div class="a" style="left:921px;top:73px;width:223px;height:23.5px;background:#424242"></div>
<div class="a" style="left:921px;top:73px;width:42.5px;height:23.5px;background:#535353"></div>
<div class="a" style="left:964px;top:73px;width:37.5px;height:23.5px;background:#474747"></div>
<svg style="left:925px;top:81.5px" width="5" height="8" viewBox="0 0 5 8"><path d="M0.5 3 L2.5 0.8 L4.5 3 M0.5 5 L2.5 7.2 L4.5 5" fill="none" stroke="#d0d0d0" stroke-width="0.9"/></svg>
<div class="t sans pt" style="left:934.5px;top:80px;color:#f0f0f0">变换</div>
<div class="t sans pt" style="left:972.4px;top:80px;color:#a6a6a6">对齐</div>
<svg style="left:1129.6px;top:81.4px" width="9" height="7" viewBox="0 0 9 7"><path d="M0 0.6 H8.6 M0 2.5 H8.6 M0 4.4 H8.6 M0 6.3 H8.6" stroke="#bdbdbd" stroke-width="0.9"/></svg>
<svg style="left:925.5px;top:113.5px" width="18" height="18" viewBox="0 0 18 18"><path d="M2.2 2.2 H15.2 V15.2 H2.2 Z M2.2 8.7 H15.2 M8.7 2.2 V15.2" fill="none" stroke="#d8d8d8" stroke-width="0.7"/><rect x="0.4" y="0.4" width="3.8" height="3.8" fill="#535353" stroke="#e6e6e6" stroke-width="0.8"/><rect x="6.9" y="0.4" width="3.8" height="3.8" fill="#535353" stroke="#e6e6e6" stroke-width="0.8"/><rect x="13.4" y="0.4" width="3.8" height="3.8" fill="#535353" stroke="#e6e6e6" stroke-width="0.8"/><rect x="0.4" y="6.9" width="3.8" height="3.8" fill="#535353" stroke="#e6e6e6" stroke-width="0.8"/><rect x="6.9" y="6.9" width="3.8" height="3.8" fill="#fff" stroke="#e6e6e6" stroke-width="0.8"/><rect x="13.4" y="6.9" width="3.8" height="3.8" fill="#535353" stroke="#e6e6e6" stroke-width="0.8"/><rect x="0.4" y="13.4" width="3.8" height="3.8" fill="#535353" stroke="#e6e6e6" stroke-width="0.8"/><rect x="6.9" y="13.4" width="3.8" height="3.8" fill="#535353" stroke="#e6e6e6" stroke-width="0.8"/><rect x="13.4" y="13.4" width="3.8" height="3.8" fill="#535353" stroke="#e6e6e6" stroke-width="0.8"/></svg>
<div class="t serif" style="left:954.5px;top:105.5px;font-size:10.4px;color:#777;letter-spacing:0.1px">X:</div>
<div class="a" style="left:967.4px;top:102.2px;width:51px;height:17.5px;background:#5c5c5c;border-radius:2px"></div>
<div class="t serif" style="left:971px;top:105.5px;font-size:10.4px;color:#787878;letter-spacing:0.1px">0<span class="mono" style="font-size:9px;margin-left:5.5px;letter-spacing:-0.3px">mm</span></div>
<div class="t serif" style="left:1023.6px;top:105.5px;font-size:10.4px;color:#777;letter-spacing:0.1px">宽 :</div>
<div class="a" style="left:1044.5px;top:102.2px;width:52px;height:17.5px;background:#5c5c5c;border-radius:2px"></div>
<div class="t serif" style="left:1048px;top:105.5px;font-size:10.4px;color:#787878;letter-spacing:0.1px">0<span class="mono" style="font-size:9px;margin-left:5.5px;letter-spacing:-0.3px">mm</span></div>
<div class="t serif" style="left:954.5px;top:129px;font-size:10.4px;color:#777;letter-spacing:0.1px">Y:</div>
<div class="a" style="left:967.4px;top:125.4px;width:51px;height:17.5px;background:#5c5c5c;border-radius:2px"></div>
<div class="t serif" style="left:971px;top:129px;font-size:10.4px;color:#787878;letter-spacing:0.1px">0<span class="mono" style="font-size:9px;margin-left:5.5px;letter-spacing:-0.3px">mm</span></div>
<div class="t serif" style="left:1023.6px;top:129px;font-size:10.4px;color:#777;letter-spacing:0.1px">高 :</div>
<div class="a" style="left:1044.5px;top:125.4px;width:52px;height:17.5px;background:#5c5c5c;border-radius:2px"></div>
<div class="t serif" style="left:1048px;top:129px;font-size:10.4px;color:#787878;letter-spacing:0.1px">0<span class="mono" style="font-size:9px;margin-left:5.5px;letter-spacing:-0.3px">mm</span></div>
<svg style="left:950.5px;top:152px" width="14" height="9" viewBox="0 0 14 9"><path d="M9 0.6 L0.8 7.2 H9.6 M6 7 A4 4 0 0 0 4.6 4.2" fill="none" stroke="#a8a8a8" stroke-width="0.9"/><rect x="11.4" y="2.6" width="1.1" height="1.1" fill="#a8a8a8"/><rect x="11.4" y="6" width="1.1" height="1.1" fill="#a8a8a8"/></svg>
<div class="a" style="left:967.4px;top:148.7px;width:50.2px;height:17.5px;background:#5c5c5c;border-radius:2px"></div>
<div class="t serif" style="left:971px;top:151.5px;font-size:10.4px;color:#787878;letter-spacing:0.1px">0°</div>
<svg style="left:1005px;top:155px" width="8" height="5" viewBox="0 0 8 5"><path d="M0.6 0.7 L4 4 L7.4 0.7" fill="none" stroke="#7a7a7a" stroke-width="1"/></svg>
<svg style="left:1024px;top:152px" width="14" height="9" viewBox="0 0 14 9"><path d="M3 0.8 H9.4 L6.6 7.6 H0.2 Z" fill="#a8a8a8"/><rect x="11.2" y="2.6" width="1.1" height="1.1" fill="#a8a8a8"/><rect x="11.2" y="6" width="1.1" height="1.1" fill="#a8a8a8"/></svg>
<div class="a" style="left:1039.6px;top:148.7px;width:50px;height:17.5px;background:#5c5c5c;border-radius:2px"></div>
<div class="t serif" style="left:1043px;top:151.5px;font-size:10.4px;color:#787878;letter-spacing:0.1px">0°</div>
<svg style="left:1077px;top:155px" width="8" height="5" viewBox="0 0 8 5"><path d="M0.6 0.7 L4 4 L7.4 0.7" fill="none" stroke="#7a7a7a" stroke-width="1"/></svg>
<svg style="left:1104px;top:115px" width="14" height="16" viewBox="0 0 14 16"><rect x="4.4" y="1.2" width="5.4" height="8.4" rx="2.7" fill="none" stroke="#d0d0d0" stroke-width="1.4"/><rect x="4.4" y="6" width="5.4" height="8.4" rx="2.7" fill="none" stroke="#d0d0d0" stroke-width="1.4"/><path d="M0.6 1.4 L13.4 14.2" stroke="#535353" stroke-width="2.8"/><path d="M0.6 1.4 L13.4 14.2" stroke="#d0d0d0" stroke-width="1.1"/></svg>
<div class="a" style="left:925px;top:171.8px;width:215.5px;height:1px;background:#474747"></div>
<div class="t serif" style="left:1006px;top:233.5px;font-size:10.4px;color:#6c6c6c;letter-spacing:0.1px">无形状属性</div>
<div class="a" style="left:925px;top:304.4px;width:215.5px;height:1px;background:#474747"></div>
<div class="a" style="left:927.3px;top:312px;width:10.2px;height:9.8px;border:1px solid #6a6a6a;border-radius:1px"></div>
<div class="t serif" style="left:942.7px;top:312.2px;font-size:10.4px;color:#6c6c6c;letter-spacing:0.1px">缩放圆角</div>
<div class="a" style="left:927.3px;top:329.4px;width:10.2px;height:9.8px;border:1px solid #6a6a6a;border-radius:1px"></div>
<div class="t serif" style="left:942.7px;top:329.8px;font-size:10.4px;color:#6c6c6c;letter-spacing:0.1px">缩放描边和效果</div>
<div class="a" style="left:921px;top:348px;width:223px;height:24.5px;background:#424242"></div>
<div class="a" style="left:921px;top:348px;width:37px;height:24.5px;background:#535353"></div>
<div class="a" style="left:958.5px;top:348px;width:36px;height:24.5px;background:#474747"></div>
<div class="a" style="left:995px;top:348px;width:58.5px;height:24.5px;background:#474747"></div>
<div class="t sans pt" style="left:930.2px;top:355.2px;color:#f0f0f0">色板</div>
<div class="t sans pt" style="left:966px;top:355.2px;color:#a6a6a6">颜色</div>
<div class="t sans pt" style="left:1003.2px;top:355.2px;color:#a6a6a6">颜色参考</div>
<svg style="left:1129.6px;top:357px" width="9" height="7" viewBox="0 0 9 7"><path d="M0 0.6 H8.6 M0 2.5 H8.6 M0 4.4 H8.6 M0 6.3 H8.6" stroke="#bdbdbd" stroke-width="0.9"/></svg>
<div class="a" style="left:936.3px;top:387.5px;width:16.6px;height:16px;background:#000;border:1px solid #e8e8e8"></div>
<div class="a" style="left:941px;top:392px;width:7px;height:7px;background:#535353;border:1px solid #aaa"></div>
<div class="a" style="left:926.7px;top:378.2px;width:17px;height:17px;background:#fff;border:0.5px solid #333"></div>
<div class="a" style="left:1097px;top:377.6px;width:42px;height:21px;border:1px solid #616161;border-radius:2px"></div>
<div class="a" style="left:1118.7px;top:377.6px;width:20.3px;height:21px;background:#383838;border-radius:0 2px 2px 0"></div>
<svg style="left:1102px;top:382px" width="11" height="13" viewBox="0 0 11 13"><path d="M0 1.2 H10.4 M0 4.6 H10.4 M0 8 H10.4 M0 11.4 H10.4" stroke="#d0d0d0" stroke-width="1.3"/></svg>
<svg style="left:1123px;top:382px" width="12" height="13" viewBox="0 0 12 13"><g fill="#d4d4d4"><rect x="0.2" y="0.6" width="3.1" height="3.1"/><rect x="4.2" y="0.6" width="3.1" height="3.1"/><rect x="8.2" y="0.6" width="3.1" height="3.1"/><rect x="0.2" y="4.6" width="3.1" height="3.1"/><rect x="4.2" y="4.6" width="3.1" height="3.1"/><rect x="8.2" y="4.6" width="3.1" height="3.1"/><rect x="0.2" y="8.6" width="3.1" height="3.1"/><rect x="4.2" y="8.6" width="3.1" height="3.1"/><rect x="8.2" y="8.6" width="3.1" height="3.1"/></g></svg>
<div class="a" style="left:926px;top:409.3px;width:213.5px;height:133px;border:1px solid #5d5d5d;border-top-color:#585858"></div>
<svg style="left:1130px;top:412px" width="7" height="4" viewBox="0 0 7 4"><path d="M0.5 3.5 L3.5 0.6 L6.5 3.5" fill="none" stroke="#606060" stroke-width="0.9"/></svg>
<svg style="left:1130px;top:534.5px" width="7" height="4" viewBox="0 0 7 4"><path d="M0.5 0.5 L3.5 3.4 L6.5 0.5" fill="none" stroke="#606060" stroke-width="0.9"/></svg>
<div class="a" style="left:926.7px;top:409.8px;width:11.5px;height:11.3px;background:#fff;overflow:hidden"><svg style="left:0;top:0" width="11.5" height="11.3" viewBox="0 0 11.5 11.3"><path d="M0 11.3 L11.5 0" stroke="#e8001c" stroke-width="1.3"/></svg></div>
<div class="a" style="left:939.2px;top:409.8px;width:11.5px;height:11.3px;background:#dedede;overflow:hidden"><svg style="left:0;top:0" width="11.5" height="11.3" viewBox="0 0 11.5 11.3"><g fill="none" stroke="#444" stroke-width="0.6"><circle cx="5.75" cy="5.65" r="3.6"/><circle cx="5.75" cy="5.65" r="1.8"/><path d="M5.75 0 V11.3 M0 5.65 H11.5"/></g></svg></div>
<div class="a" style="left:951.7px;top:409.8px;width:11.5px;height:11.3px;background:#fff;border:1px solid #cfcfcf;border-right-color:#444;border-bottom-color:#444"></div>
<div class="a" style="left:964.2px;top:409.8px;width:11.5px;height:11.3px;background:#000"></div>
<div class="a" style="left:976.7px;top:409.8px;width:11.5px;height:11.3px;background:#e60012"></div>
<div class="a" style="left:989.2px;top:409.8px;width:11.5px;height:11.3px;background:#fff100"></div>
<div class="a" style="left:1001.7px;top:409.8px;width:11.5px;height:11.3px;background:#009944"></div>
<div class="a" style="left:1014.2px;top:409.8px;width:11.5px;height:11.3px;background:#00a0e9"></div>
<div class="a" style="left:1026.7px;top:409.8px;width:11.5px;height:11.3px;background:#1d2088"></div>
<div class="a" style="left:1039.1px;top:409.8px;width:11.5px;height:11.3px;background:#e4007f"></div>
<div class="a" style="left:1051.6px;top:409.8px;width:11.5px;height:11.3px;background:#c30d23"></div>
<div class="a" style="left:1064.1px;top:409.8px;width:11.5px;height:11.3px;background:#e83828"></div>
<div class="a" style="left:1076.6px;top:409.8px;width:11.5px;height:11.3px;background:#ea5514"></div>
<div class="a" style="left:1089.1px;top:409.8px;width:11.5px;height:11.3px;background:#f39800"></div>
<div class="a" style="left:1101.6px;top:409.8px;width:11.5px;height:11.3px;background:#f8b62d"></div>
<div class="a" style="left:1114.1px;top:409.8px;width:11.5px;height:11.3px;background:#f9ee1d"></div>
<div class="a" style="left:926.7px;top:422.5px;width:11.5px;height:11.3px;background:#dfe000"></div>
<div class="a" style="left:939.2px;top:422.5px;width:11.5px;height:11.3px;background:#8fc31f"></div>
<div class="a" style="left:951.7px;top:422.5px;width:11.5px;height:11.3px;background:#22ac38"></div>
<div class="a" style="left:964.2px;top:422.5px;width:11.5px;height:11.3px;background:#009944"></div>
<div class="a" style="left:976.7px;top:422.5px;width:11.5px;height:11.3px;background:#006934"></div>
<div class="a" style="left:989.2px;top:422.5px;width:11.5px;height:11.3px;background:#13ae67"></div>
<div class="a" style="left:1001.7px;top:422.5px;width:11.5px;height:11.3px;background:#0ba29a"></div>
<div class="a" style="left:1014.2px;top:422.5px;width:11.5px;height:11.3px;background:#2ca6e0"></div>
<div class="a" style="left:1026.7px;top:422.5px;width:11.5px;height:11.3px;background:#0e6eb8"></div>
<div class="a" style="left:1039.1px;top:422.5px;width:11.5px;height:11.3px;background:#172a88"></div>
<div class="a" style="left:1051.6px;top:422.5px;width:11.5px;height:11.3px;background:#1b1c6e"></div>
<div class="a" style="left:1064.1px;top:422.5px;width:11.5px;height:11.3px;background:#601986"></div>
<div class="a" style="left:1076.6px;top:422.5px;width:11.5px;height:11.3px;background:#920783"></div>
<div class="a" style="left:1089.1px;top:422.5px;width:11.5px;height:11.3px;background:#a40b5d"></div>
<div class="a" style="left:1101.6px;top:422.5px;width:11.5px;height:11.3px;background:#dc0052"></div>
<div class="a" style="left:1114.1px;top:422.5px;width:11.5px;height:11.3px;background:#e5177c"></div>
<div class="a" style="left:926.7px;top:435.0px;width:11.5px;height:11.3px;background:#cfbf9c"></div>
<div class="a" style="left:939.2px;top:435.0px;width:11.5px;height:11.3px;background:#a48b78"></div>
<div class="a" style="left:951.7px;top:435.0px;width:11.5px;height:11.3px;background:#7e6b5a"></div>
<div class="a" style="left:964.2px;top:435.0px;width:11.5px;height:11.3px;background:#62493a"></div>
<div class="a" style="left:976.7px;top:435.0px;width:11.5px;height:11.3px;background:#cfa163"></div>
<div class="a" style="left:989.2px;top:435.0px;width:11.5px;height:11.3px;background:#b9834a"></div>
<div class="a" style="left:1001.7px;top:435.0px;width:11.5px;height:11.3px;background:#996236"></div>
<div class="a" style="left:1014.2px;top:435.0px;width:11.5px;height:11.3px;background:#7f4e21"></div>
<div class="a" style="left:1026.7px;top:435.0px;width:11.5px;height:11.3px;background:#6a3906"></div>
<div class="a" style="left:1039.1px;top:435.0px;width:11.5px;height:11.3px;background:#42210b"></div>
<div class="a" style="left:1051.6px;top:435.0px;width:11.5px;height:11.3px;background:linear-gradient(to right,#fff,#000)"></div>
<div class="a" style="left:1064.1px;top:435.0px;width:11.5px;height:11.3px;background:linear-gradient(to right,#ffe600,#f7931e 60%,#e8382e)"></div>
<div class="a" style="left:1076.6px;top:435.0px;width:11.5px;height:11.3px;background:linear-gradient(to right,#1d72c8,#8fc0ea 60%,#fff)"></div>
<div class="a" style="left:1089.1px;top:435.0px;width:11.5px;height:11.3px;background:#000"><div class="a" style="left:2px;top:2px;width:7.5px;height:7.3px;border-radius:50%;background:#d8d8d8"></div></div>
<div class="a" style="left:1101.6px;top:435.0px;width:11.5px;height:11.3px;background:#f2f7e6;overflow:hidden"><div class="a" style="left:0.5px;top:0.5px;width:4.5px;height:4.5px;border-radius:50% 10%;background:#56b030"></div><div class="a" style="left:6.5px;top:0.5px;width:4.5px;height:4.5px;border-radius:10% 50%;background:#6cbc3a"></div><div class="a" style="left:0.5px;top:6.3px;width:4.5px;height:4.5px;border-radius:10% 50%;background:#6cbc3a"></div><div class="a" style="left:6.5px;top:6.3px;width:4.5px;height:4.5px;border-radius:50% 10%;background:#56b030"></div><div class="a" style="left:4px;top:4px;width:3.5px;height:3.3px;border-radius:50%;background:#8ccc50"></div></div>
<div class="a" style="left:1114.1px;top:435.0px;width:11.5px;height:11.3px;background:#9a6a46;background-image:radial-gradient(#e8dccb 35%,transparent 40%);background-size:3px 3px"></div>
<div class="a" style="left:926.7px;top:449.2px;width:11.5px;height:11.3px;"><svg style="left:0.5px;top:1.5px" width="11" height="9" viewBox="0 0 11 9"><path d="M0 0.2 H4 L4.8 1.4 H0 Z" fill="#cfcfcf"/><rect x="0" y="2" width="10.4" height="6.6" fill="#cfcfcf"/></svg></div>
<div class="a" style="left:939.2px;top:449.2px;width:11.5px;height:11.3px;background:#000"></div>
<div class="a" style="left:951.7px;top:449.2px;width:11.5px;height:11.3px;background:#3a3a3a"></div>
<div class="a" style="left:964.2px;top:449.2px;width:11.5px;height:11.3px;background:#575757"></div>
<div class="a" style="left:976.7px;top:449.2px;width:11.5px;height:11.3px;background:#717171"></div>
<div class="a" style="left:989.2px;top:449.2px;width:11.5px;height:11.3px;background:#8a8a8a"></div>
<div class="a" style="left:1001.7px;top:449.2px;width:11.5px;height:11.3px;background:#a0a0a0"></div>
<div class="a" style="left:1014.2px;top:449.2px;width:11.5px;height:11.3px;background:#b5b5b5"></div>
<div class="a" style="left:1026.7px;top:449.2px;width:11.5px;height:11.3px;background:#c9c9c9"></div>
<div class="a" style="left:1039.1px;top:449.2px;width:11.5px;height:11.3px;background:#dcdcdc"></div>
<div class="a" style="left:1051.6px;top:449.2px;width:11.5px;height:11.3px;background:#efefef"></div>
<div class="a" style="left:1064.1px;top:449.2px;width:11.5px;height:11.3px;background:#f7f8f8"></div>
<div class="a" style="left:926.7px;top:463.6px;width:11.5px;height:11.3px;"><svg style="left:0.5px;top:1.5px" width="11" height="9" viewBox="0 0 11 9"><path d="M0 0.2 H4 L4.8 1.4 H0 Z" fill="#cfcfcf"/><rect x="0" y="2" width="10.4" height="6.6" fill="#cfcfcf"/></svg></div>
<div class="a" style="left:939.2px;top:463.6px;width:11.5px;height:11.3px;background:#e60012"></div>
<div class="a" style="left:951.7px;top:463.6px;width:11.5px;height:11.3px;background:#eb6100"></div>
<div class="a" style="left:964.2px;top:463.6px;width:11.5px;height:11.3px;background:#ffe100"></div>
<div class="a" style="left:976.7px;top:463.6px;width:11.5px;height:11.3px;background:#009944"></div>
<div class="a" style="left:989.2px;top:463.6px;width:11.5px;height:11.3px;background:#00309c"></div>
<div class="a" style="left:1001.7px;top:463.6px;width:11.5px;height:11.3px;background:#7d2d8f"></div>
<svg style="left:921px;top:543px" width="223" height="17" viewBox="921 543 223 17">
<g fill="#cfcfcf"><rect x="930.6" y="546.4" width="1.8" height="9.6"/><rect x="933.4" y="546.4" width="1.8" height="9.6"/><path d="M936.4 547 L938.2 546.4 L941.2 555.6 L939.4 556.2 Z"/><path d="M942.4 555 H945 L943.7 556.8 Z"/></g>
<g fill="none" stroke="#cfcfcf" stroke-width="1"><circle cx="958" cy="551.6" r="1.6"/><circle cx="963.8" cy="547.6" r="1.4"/><circle cx="963.8" cy="555.6" r="1.4"/><path d="M959.4 550.8 L962.6 548.4 M959.4 552.4 L962.6 554.8"/></g>
<path d="M981.4 556 H989.4 A3 3 0 0 0 989.8 550 A4.2 4.2 0 0 0 982 549.4 A3.4 3.4 0 0 0 981.4 556 Z" fill="#cfcfcf"/><path d="M975.4 553.6 H979.4 M977.8 551.6 L979.8 553.6 L977.8 555.6" fill="none" stroke="#cfcfcf" stroke-width="1.1"/>
<g fill="#cfcfcf"><rect x="1016.2" y="546.4" width="2.9" height="2.7"/><rect x="1019.9" y="546.4" width="2.9" height="2.7"/><rect x="1023.6" y="546.4" width="2.9" height="2.7"/><rect x="1016.2" y="549.9" width="2.9" height="2.7"/><rect x="1019.9" y="549.9" width="2.9" height="2.7"/><rect x="1023.6" y="549.9" width="2.9" height="2.7"/><rect x="1016.2" y="553.4" width="2.9" height="2.7"/><rect x="1019.9" y="553.4" width="2.9" height="2.7"/><rect x="1023.6" y="553.4" width="2.9" height="2.7"/><path d="M1028 555.4 H1030.6 L1029.3 557.2 Z"/></g>
<rect x="1040.4" y="546.8" width="9.6" height="9.4" fill="none" stroke="#cfcfcf" stroke-width="1"/><path d="M1040.4 549.4 H1050 M1042.4 551.6 H1048 M1042.4 553.8 H1048" stroke="#cfcfcf" stroke-width="0.9"/>
<path d="M1062.4 547.4 H1066.8 L1067.8 548.8 H1075.2 V556.2 H1062.4 Z" fill="#cfcfcf"/>
<path d="M1087.4 546.8 H1097.2 V556.4 H1091.4 L1087.4 552.4 Z" fill="#cfcfcf"/><path d="M1087.6 553.2 L1090.6 556.2 H1087.6 Z" fill="#535353"/>
<path d="M1111 548.8 H1119 L1118.2 556.6 H1111.8 Z" fill="none" stroke="#cfcfcf" stroke-width="1.1"/><path d="M1109.8 548.4 H1120.2 M1113.2 548 V546.6 H1116.8 V548 M1113.6 550.6 V554.8 M1116.4 550.6 V554.8" fill="none" stroke="#cfcfcf" stroke-width="1"/>
</svg>
<div class="a" style="left:921px;top:345px;width:223px;height:1.6px;background:#2f2f2f"></div>
<div class="a" style="left:921px;top:560px;width:223px;height:1.6px;background:#2f2f2f"></div>
<div class="a" style="left:921px;top:587px;width:223px;height:1.6px;background:#2f2f2f"></div>
<div class="a" style="left:921px;top:614.4px;width:223px;height:1.6px;background:#333"></div>
<div class="a" style="left:921px;top:562.4px;width:37px;height:24.6px;background:#474747"></div>
<div class="a" style="left:958.5px;top:562.4px;width:42px;height:24.6px;background:#535353"></div>
<div class="t sans pt" style="left:930px;top:570.2px;color:#a0a0a0">描边</div>
<svg style="left:962.8px;top:571px" width="5" height="8" viewBox="0 0 5 8"><path d="M0.5 3 L2.5 0.8 L4.5 3 M0.5 5 L2.5 7.2 L4.5 5" fill="none" stroke="#d0d0d0" stroke-width="0.9"/></svg>
<div class="t sans pt" style="left:972.4px;top:570.2px;color:#f0f0f0">渐变</div>
<svg style="left:1129.6px;top:571.6px" width="9" height="7" viewBox="0 0 9 7"><path d="M0 0.6 H8.6 M0 2.5 H8.6 M0 4.4 H8.6 M0 6.3 H8.6" stroke="#bdbdbd" stroke-width="0.9"/></svg>
<div class="a" style="left:921px;top:589.5px;width:37px;height:24.8px;background:#535353"></div>
<div class="a" style="left:958.5px;top:589.5px;width:36.6px;height:24.8px;background:#474747"></div>
<div class="a" style="left:995.6px;top:589.5px;width:35.4px;height:24.8px;background:#474747"></div>
<div class="t sans pt" style="left:930px;top:597.4px;color:#f0f0f0">画板</div>
<div class="t sans pt" style="left:966.2px;top:597.4px;color:#a0a0a0">图层</div>
<div class="t sans pt" style="left:1004.4px;top:597.4px;color:#a0a0a0">库</div>
<svg style="left:1129.6px;top:598.8px" width="9" height="7" viewBox="0 0 9 7"><path d="M0 0.6 H8.6 M0 2.5 H8.6 M0 4.4 H8.6 M0 6.3 H8.6" stroke="#bdbdbd" stroke-width="0.9"/></svg>
<div class="a" style="left:1137.2px;top:568.5px;width:6.8px;height:42.7px;background:#3a4256;border-radius:2.5px 0 0 2.5px"></div>
<div class="a" style="left:1139.8px;top:572.60px;width:3.2px;height:1.5px;background:#2b3242"></div>
<div class="a" style="left:1139.8px;top:574.76px;width:3.2px;height:1.5px;background:#2b3242"></div>
<div class="a" style="left:1139.8px;top:576.92px;width:3.2px;height:1.5px;background:#2b3242"></div>
<div class="a" style="left:1139.8px;top:579.08px;width:3.2px;height:1.5px;background:#2b3242"></div>
<div class="a" style="left:1139.8px;top:581.24px;width:3.2px;height:1.5px;background:#d9a52e"></div>
<div class="a" style="left:1139.8px;top:583.40px;width:3.2px;height:1.5px;background:#dcb034"></div>
<div class="a" style="left:1139.8px;top:585.56px;width:3.2px;height:1.5px;background:#d8bc3a"></div>
<div class="a" style="left:1139.8px;top:587.72px;width:3.2px;height:1.5px;background:#cfc440"></div>
<div class="a" style="left:1139.8px;top:589.88px;width:3.2px;height:1.5px;background:#bcc646"></div>
<div class="a" style="left:1139.8px;top:592.04px;width:3.2px;height:1.5px;background:#a4c650"></div>
<div class="a" style="left:1139.8px;top:594.20px;width:3.2px;height:1.5px;background:#86c45c"></div>
<div class="a" style="left:1139.8px;top:596.36px;width:3.2px;height:1.5px;background:#66c26c"></div>
<div class="a" style="left:1139.8px;top:598.52px;width:3.2px;height:1.5px;background:#4cc07e"></div>
<div class="a" style="left:1139.8px;top:600.68px;width:3.2px;height:1.5px;background:#3abd8e"></div>
<div class="a" style="left:1139.8px;top:602.84px;width:3.2px;height:1.5px;background:#30bb9c"></div>
<div class="a" style="left:1139.8px;top:605.00px;width:3.2px;height:1.5px;background:#2cbaa6"></div>
<!-- /right dock content -->

<!-- TASKBAR -->
<div id="taskbar" class="a" style="left:3px;top:616px;width:1141px;height:30px;background:#40051e"></div>

<!-- taskbar content -->
<div class="a" style="left:235px;top:616px;width:36.3px;height:30px;background:#7e1438"></div>
<div class="a" style="left:164px;top:644.2px;width:24px;height:1.8px;background:#f4a8c8"></div><div class="a" style="left:188px;top:644.2px;width:7px;height:1.8px;background:#b07a94"></div>
<div class="a" style="left:201px;top:644.2px;width:30.7px;height:1.8px;background:#f4a8c8"></div>
<div class="a" style="left:235px;top:644.2px;width:36.3px;height:1.8px;background:#f4a8c8"></div>
<svg style="left:0;top:612px" width="1153" height="41" viewBox="0 612 1153 41">
<g fill="#fff"><path d="M15.1 626.8 L19.9 626.1 V630.6 H15.1 Z"/><path d="M20.6 626 L26.8 625.1 V630.6 H20.6 Z"/><path d="M15.1 631.3 H19.9 V635.8 L15.1 635.1 Z"/><path d="M20.6 631.3 H26.8 V636.8 L20.6 635.9 Z"/></g>
<circle cx="56.7" cy="630.9" r="4.7" fill="none" stroke="#fff" stroke-width="1.7"/>
<rect x="87.6" y="626.2" width="9.6" height="10" fill="none" stroke="#fff" stroke-width="1"/><path d="M86 627.6 H84.8 V634.8 H86 M98.8 627.6 H100 V634.8 H98.8" fill="none" stroke="#fff" stroke-width="0.9"/>
<rect x="114.2" y="623.3" width="0.8" height="14.8" fill="#6e4456"/>
<path d="M134 624.6 H139.6 L140.8 625.8 H150.4 V637 H134 Z" fill="#f7d774"/><path d="M134 626.6 H150.4 V637.4 H134 Z" fill="#fbe08e"/><path d="M136.6 631 H147.8 V637.4 H136.6 Z" fill="#2b9be6"/><path d="M139.4 634 H145 V637.4 H139.4 Z" fill="#fbe08e"/><rect x="135" y="624.9" width="3" height="0.8" fill="#fff" opacity=".8"/>
<circle cx="179.2" cy="630.6" r="6.7" fill="none" stroke="#1d8bf1" stroke-width="3.2"/><path d="M183 634 L187.6 638.6" stroke="#1d8bf1" stroke-width="3"/>
<path d="M178.8 639.2 H187 A2 2 0 0 0 187.2 635.2 A3.2 3.2 0 0 0 181.4 634.8 A2.3 2.3 0 0 0 178.8 639.2 Z" fill="#f4f6fa"/>
<rect x="208.2" y="622.8" width="15.6" height="15" fill="#0b2233" stroke="#12c6ff" stroke-width="0.9"/>
<text x="216" y="633.8" font-family="Liberation Sans, sans-serif" font-size="8.8" font-weight="bold" fill="#12c6ff" text-anchor="middle">Ps</text>
<rect x="244.9" y="622.8" width="15.6" height="15" fill="#2d1300" stroke="#ff7f18" stroke-width="0.9"/>
<text x="252.7" y="633.8" font-family="Liberation Sans, sans-serif" font-size="8.8" font-weight="bold" fill="#ff7f18" text-anchor="middle">Ai</text>
<g fill="none" stroke="#fff" stroke-width="0.9"><circle cx="855" cy="627.6" r="1.9"/><path d="M851.6 633.4 A3.4 3.4 0 0 1 858.2 632.6"/><circle cx="850" cy="630.8" r="1.7"/><path d="M846.6 636.8 A3.4 3.4 0 0 1 853.4 636.8"/></g>
<path d="M874.2 634 L878.9 629 L883.6 634" fill="none" stroke="#fff" stroke-width="1"/>
<ellipse cx="896.5" cy="632.6" rx="4" ry="4.6" fill="#111"/><ellipse cx="896.5" cy="628.8" rx="2.9" ry="2.6" fill="#111"/><ellipse cx="896.5" cy="633.6" rx="2.4" ry="3" fill="#fff"/><path d="M893.4 630.8 Q896.5 632.6 899.6 630.8 L899.4 632 Q896.5 633.4 893.6 632 Z" fill="#e8242c"/><ellipse cx="896.5" cy="629.9" rx="1.5" ry="0.7" fill="#f5a623"/><ellipse cx="894.4" cy="637.2" rx="1.8" ry="0.8" fill="#f5a623"/><ellipse cx="898.6" cy="637.2" rx="1.8" ry="0.8" fill="#f5a623"/>
<path d="M908.4 629.8 H910.4 L913.2 627 V636.6 L910.4 633.8 H908.4 Z" fill="none" stroke="#fff" stroke-width="0.9"/><path d="M915 629.8 A2.8 2.8 0 0 1 915 633.8 M916.8 628 A5.2 5.2 0 0 1 916.8 635.6 M918.6 626.4 A7.6 7.6 0 0 1 918.6 637.2" fill="none" stroke="#fff" stroke-width="0.8"/>
<path d="M928 636.6 A8.6 8.6 0 0 1 937.4 627.6 M930.6 636.6 A6 6 0 0 1 937.4 630.4 M933.2 636.6 A3.4 3.4 0 0 1 937.4 633.2" fill="none" stroke="#fff" stroke-width="0.9" opacity=".9"/><circle cx="936.4" cy="636" r="0.9" fill="#fff"/>
<rect x="946.4" y="628.4" width="9.8" height="6.4" fill="none" stroke="#fff" stroke-width="1"/><rect x="947.8" y="629.8" width="7" height="3.6" fill="#fff"/><path d="M944.4 628 L946.4 629.6 V633.6 L944.4 635.2" fill="none" stroke="#fff" stroke-width="0.9"/>
<path d="M966 636.6 C964.4 634.6 966.8 632.8 969 631 L974 626.6 C975.6 625.4 977.6 627 976.4 628.8 L971.4 634.6 C969.8 636.4 967.4 634.4 968.8 632.8 L973.6 628.2" fill="none" stroke="#fff" stroke-width="1"/><path d="M968.6 628.2 L972.8 633.8" stroke="#fff" stroke-width="0.9"/>
<rect x="985.4" y="626.8" width="17.8" height="9.2" rx="1" fill="none" stroke="#fff" stroke-width="0.9"/><path d="M987.6 629.4 H1001 M987.6 631.4 H1001" stroke="#fff" stroke-width="0.9" stroke-dasharray="1.2 1"/><path d="M989.6 633.6 H999" stroke="#fff" stroke-width="0.9"/>
<text x="1010.2" y="635.8" font-family="Liberation Sans, Noto Sans CJK SC, sans-serif" font-size="10.6" fill="#fff">中</text>
<rect x="1030.6" y="625.8" width="11.2" height="11.2" fill="#fff"/><text x="1036.2" y="635.4" font-family="Liberation Sans, sans-serif" font-size="10.6" fill="#111" text-anchor="middle">M</text>
<text x="1077.2" y="628.2" font-family="Liberation Sans, sans-serif" font-size="9.8" fill="#fff" text-anchor="middle">22:36</text>
<text x="1077.2" y="641.2" font-family="Liberation Sans, sans-serif" font-size="9.8" fill="#fff" text-anchor="middle">2018/4/22</text>
<path d="M1114.4 625.8 H1126 V634.6 H1122 L1120.2 636.6 L1118.4 634.6 H1114.4 Z" fill="none" stroke="#fff" stroke-width="0.9"/>
<rect x="1141.4" y="616" width="0.6" height="30" fill="#6e4456"/>
</svg>
<!-- /taskbar content -->
</body>
</html>
